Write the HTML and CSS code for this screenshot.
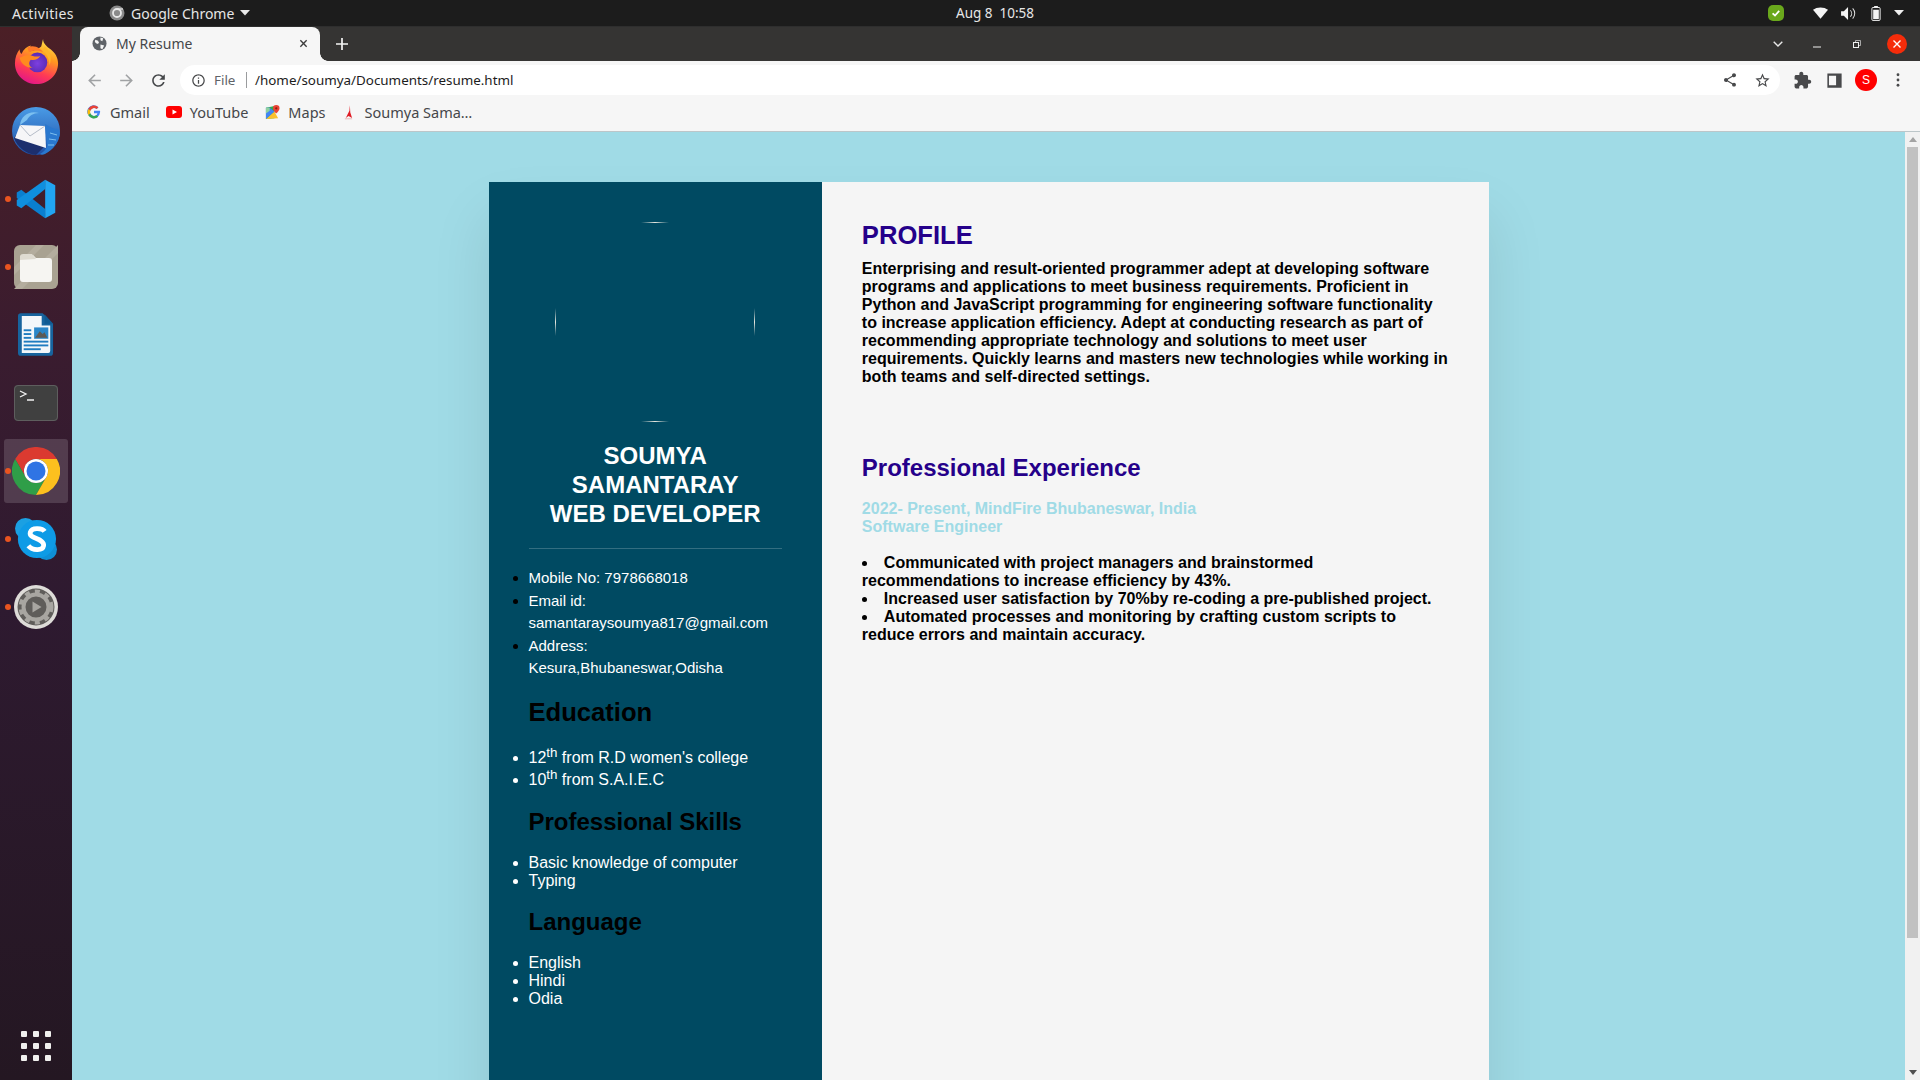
FILE: index.html
```html
<!DOCTYPE html>
<html lang="en">
<head>
<meta charset="utf-8">
<title>My Resume</title>
<link rel="stylesheet" href="styles.css">
</head>
<body>
<div class="desktop">
  <header class="topbar">
    <div class="top-left">
      <span class="activities">Activities</span>
      <svg class="app-ind" viewBox="0 0 16 16"><circle cx="8" cy="8" r="7.500" fill="#8a8a8a"/><circle cx="8" cy="8" r="4" fill="none" stroke="#e8e8e8" stroke-width="1.800"/><path d="M8 4h6" stroke="#e8e8e8" stroke-width="1.200"/></svg>
      <span class="app-name">Google Chrome</span>
      <svg class="caret" viewBox="0 0 10 6"><path d="M0 0h10L5 5.500z" fill="#e8e8e8"/></svg>
    </div>
    <div class="clock">Aug 8&nbsp;&nbsp;10:58</div>
    <div class="tray">
      <svg class="tray-shield" viewBox="0 0 16 16"><rect width="16" height="16" rx="5" fill="#6aa81c"/><path d="M4.600 8.300l2.400 2.200 4.200-4.600" fill="none" stroke="#fff" stroke-width="1.800"/></svg>
      <svg class="tray-wifi" viewBox="0 0 16 12"><path d="M0 2.600C2 .9 5 0 8 0s6 .9 8 2.600L8 12z" fill="#f4f4f4"/></svg>
      <svg class="tray-vol" viewBox="0 0 16 14"><path d="M0 4.500h3L7.500 0v14L3 9.500H0z" fill="#f4f4f4"/><path d="M10 3.500a5 5 0 0 1 0 7M12.500 1.500a8 8 0 0 1 0 11" fill="none" stroke="#dcdcdc" stroke-width="1.100"/></svg>
      <svg class="tray-bat" viewBox="0 0 10 16"><path d="M3 0h4v1.500H3z" fill="#f4f4f4"/><rect x=".6" y="1.600" width="8.800" height="13.800" rx="1.200" fill="none" stroke="#f4f4f4" stroke-width="1"/><rect x="2" y="4" width="6" height="10" fill="#f4f4f4"/></svg>
      <svg class="tray-caret" viewBox="0 0 10 6"><path d="M0 0h10L5 5.500z" fill="#f0f0f0"/></svg>
    </div>
  </header>

  <div class="workspace">
    <nav class="dock">
      <div class="dock-item">
        <svg class="ico-firefox" viewBox="0 0 48 48">
          <defs>
            <linearGradient id="ff1" x1="0.700" y1="0" x2="0.300" y2="1"><stop offset="0" stop-color="#ffe14a"/><stop offset=".35" stop-color="#ff9a1f"/><stop offset=".7" stop-color="#ff3a55"/><stop offset="1" stop-color="#e0148c"/></linearGradient>
            <radialGradient id="ff2" cx=".5" cy=".55" r=".55"><stop offset="0" stop-color="#7d3fe0"/><stop offset="1" stop-color="#5a2ab5"/></radialGradient>
          </defs>
          <path d="M31 0c0 5 4 8 8 11 5 4 8 9 8 15 0 12-10 22-23 22S1 38 1 26c0-6 2-11 5-15 0 3 1 4 2 5 2-5 6-8 10-9-2 3-2 5-1 6 5-1 9-2 12-5 1-3 1-5 2-8z" fill="url(#ff1)"/>
          <circle cx="25" cy="25" r="10.500" fill="url(#ff2)"/>
          <path d="M6 20c5-3 10-4 14-2 3 1 6 1 8 0-2 4-7 5-10 4-3 3-2 7 2 9-7 0-13-5-14-11z" fill="#ff8a1f"/>
          <path d="M33 8c5 5 8 11 5 20-1-8-3-13-8-16z" fill="#ffb52a"/>
          <path d="M14 9c4-2 9-2 13 1 1 1 3 2 4 4-5-2-11-2-15 0z" fill="#ff7a2a"/>
        </svg>
      </div>
      <div class="dock-item">
        <svg class="ico-tb" viewBox="0 0 48 48">
          <defs><linearGradient id="tb1" x1="0.500" y1="0" x2="0.500" y2="1"><stop offset="0" stop-color="#4a9be6"/><stop offset="1" stop-color="#1e4fa6"/></linearGradient></defs>
          <circle cx="24" cy="24" r="24" fill="url(#tb1)"/>
          <path d="M2 31c3 9 12 16 22 17l8-8-28-12z" fill="#1c2f6e"/>
          <path d="M8 18C9 8 18 3 27 6c-6 0-10 3-12 7z" fill="#7cc0f0"/>
          <path d="M8 18l25 1 1 22-31-10z" fill="#f6f6f8"/>
          <path d="M8 18l10 11 15-10" fill="none" stroke="#aeb6c2" stroke-width=".9"/>
          <path d="M33 17c5 3 9 5 13 5l2 4c-1 9-7 17-15 21-2 1-4 1-5 0 4-2 6-5 7-8z" fill="#2a78cf"/>
          <path d="M38 26l7 2M37 32l7 1M36 38l6 0" stroke="#7fc0ee" stroke-width="1"/>
        </svg>
      </div>
      <div class="dock-item">
        <span class="dot"></span>
        <svg class="ico-code" viewBox="0 0 48 48">
          <path d="M3 17l5-3 26 21v10L3 23z" fill="#0a7fd0"/>
          <path d="M34 3v10L8 34l-5-3v-6z" fill="#0f8fdf"/>
          <path d="M34 3l11 6v30l-11 6z" fill="#21a5f2"/>
        </svg>
      </div>
      <div class="dock-item">
        <span class="dot"></span>
        <svg class="ico-files" viewBox="0 0 44 44">
          <rect width="44" height="44" rx="6" fill="#a9a292"/>
          <path d="M30 0L0 30v-8L22 0zM44 8L8 44H0L44 0z" fill="#b4ad9e"/>
          <path d="M6 13a3 3 0 0 1 3-3h10l3 3h13a3 3 0 0 1 3 3v18a3 3 0 0 1-3 3H9a3 3 0 0 1-3-3z" fill="#f6f5f2"/>
          <path d="M6 15v-3a3 3 0 0 1 3-3h9l4 5z" fill="#dfdbd1"/>
        </svg>
      </div>
      <div class="dock-item">
        <svg class="ico-writer" viewBox="0 0 38 46">
          <path d="M3 0h23l11 11v31a3 3 0 0 1-3 3H3a3 3 0 0 1-3-3V3a3 3 0 0 1 3-3z" fill="#17649e"/>
          <path d="M4 3h21v10h9v27a2 2 0 0 1-2 2H4z" fill="#f3f7fa"/>
          <path d="M28 1l9 10h-9z" fill="#0f5a92"/>
          <rect x="6" y="17" width="8" height="2" fill="#1f7cc0"/><rect x="6" y="21" width="8" height="2" fill="#1f7cc0"/><rect x="6" y="25" width="8" height="2" fill="#1f7cc0"/>
          <rect x="6" y="29" width="26" height="2" fill="#1f7cc0"/><rect x="6" y="33" width="26" height="2" fill="#1f7cc0"/><rect x="6" y="37" width="18" height="2" fill="#1f7cc0"/>
          <rect x="17" y="15" width="15" height="12" fill="#2a86c8"/><path d="M18 26l5-7 3 3 2-2 3 6z" fill="#5d5a55"/>
        </svg>
      </div>
      <div class="dock-item">
        <svg class="ico-term" viewBox="0 0 44 36">
          <rect width="44" height="36" rx="4" fill="#404040"/>
          <rect x=".5" y=".5" width="43" height="35" rx="3.500" fill="none" stroke="#5e5e5e"/>
          <path d="M6 6l6 3-6 3" fill="none" stroke="#f2f2f2" stroke-width="1.300"/>
          <path d="M13 15h7" stroke="#f2f2f2" stroke-width="1.500"/>
        </svg>
      </div>
      <div class="dock-item dock-item-active">
        <span class="dot"></span>
        <svg class="ico-chrome" viewBox="0 0 48 48">
          <path d="M3.200 12A24 24 0 0 1 44.800 12H24A12 12 0 0 0 13.600 30z" fill="#db3a30"/>
          <path d="M3.200 12A24 24 0 0 0 24 48L34.400 30A12 12 0 0 1 13.600 30z" fill="#2f9e48"/>
          <path d="M44.800 12A24 24 0 0 1 24 48L34.400 30A12 12 0 0 0 24 12z" fill="#fcc01e"/>
          <circle cx="24" cy="24" r="12" fill="#fff"/><circle cx="24" cy="24" r="9.500" fill="#2f74e4"/>
        </svg>
      </div>
      <div class="dock-item">
        <span class="dot"></span>
        <svg class="ico-skype" viewBox="0 0 44 44">
          <circle cx="11" cy="11" r="11" fill="#1ba0e2"/><circle cx="33" cy="33" r="11" fill="#0f8fd6"/>
          <circle cx="23" cy="22" r="20" fill="#0e9be6"/>
          <path d="M31 14c-2-3-13-5-15 1-2 7 15 6 14 14-1 6-12 5-16 0" fill="none" stroke="#fff" stroke-width="5"/>
        </svg>
      </div>
      <div class="dock-item">
        <span class="dot"></span>
        <svg class="ico-settings" viewBox="0 0 44 44">
          <circle cx="22" cy="22" r="22" fill="#dedcd8"/>
          <circle cx="22" cy="22" r="18.500" fill="#5f5d5a"/>
          <circle cx="22" cy="22" r="12.500" fill="none" stroke="#a8a6a1" stroke-width="4"/>
          <circle cx="22" cy="22" r="15.500" fill="none" stroke="#a8a6a1" stroke-width="4" stroke-dasharray="5 5.200"/>
          <path d="M18.500 16.500l9 5.500-9 5.500z" fill="#a8a6a1"/>
        </svg>
      </div>
      <div class="apps-grid">
        <i></i><i></i><i></i><i></i><i></i><i></i><i></i><i></i><i></i>
      </div>
    </nav>

    <div class="browser">
      <div class="tabstrip">
        <div class="tab">
          <svg class="tab-globe" viewBox="0 0 16 16"><circle cx="8" cy="8" r="7.500" fill="#5f6368"/><path d="M3.500 4l3 1 1 2.500-2 1-2.500-2zM9 1.500l3 1-1 3-2-1zM9 9l4 1-2 4-2-1z" fill="#f6f6f6"/></svg>
          <span class="tab-title">My Resume</span>
          <svg class="tab-close" viewBox="0 0 10 10"><path d="M1.500 1.500l7 7M8.500 1.500l-7 7" stroke="#3c3c3c" stroke-width="1.500"/></svg>
        </div>
        <svg class="newtab" viewBox="0 0 12 12"><path d="M6 0v12M0 6h12" stroke="#f4f4f4" stroke-width="1.700"/></svg>
        <div class="win-controls">
          <svg class="win-chev" viewBox="0 0 10 6"><path d="M.7.700L5 5l4.300-4.300" fill="none" stroke="#e8e8e8" stroke-width="1.400"/></svg>
          <svg class="win-min" viewBox="0 0 8 2"><path d="M0 1h8" stroke="#f0f0f0" stroke-width="1"/></svg>
          <svg class="win-max" viewBox="0 0 8 8"><rect x=".5" y="2.500" width="5" height="5" fill="none" stroke="#f0f0f0"/><path d="M2.500 2V.5h5v5H6" fill="none" stroke="#c8c8c8" stroke-width=".8"/></svg>
          <div class="win-close"><svg viewBox="0 0 8 8"><path d="M.5.500l7 7M7.500.500l-7 7" stroke="#fff" stroke-width="1.400"/></svg></div>
        </div>
      </div>

      <div class="toolbar">
        <span class="tb-btn"><svg viewBox="0 0 24 24"><path class="ic-muted" d="M20 11H7.830l5.590-5.590L12 4l-8 8 8 8 1.410-1.410L7.830 13H20v-2z"/></svg></span>
        <span class="tb-btn"><svg viewBox="0 0 24 24"><path class="ic-muted" d="M4 11h12.170l-5.590-5.590L12 4l8 8-8 8-1.410-1.410L16.170 13H4v-2z"/></svg></span>
        <span class="tb-btn"><svg viewBox="0 0 24 24"><path class="ic-dark" d="M17.650 6.350C16.200 4.900 14.210 4 12 4c-4.420 0-7.990 3.580-7.990 8s3.570 8 7.990 8c3.730 0 6.840-2.550 7.730-6h-2.080c-.82 2.330-3.040 4-5.650 4-3.310 0-6-2.690-6-6s2.690-6 6-6c1.660 0 3.140.690 4.220 1.780L13 11h7V4l-2.350 2.350z"/></svg></span>
        <div class="omnibox">
          <svg class="omni-info" viewBox="0 0 24 24"><path class="ic-mid" d="M11 7h2v2h-2zm0 4h2v6h-2zm1-9C6.480 2 2 6.480 2 12s4.480 10 10 10 10-4.480 10-10S17.520 2 12 2zm0 18c-4.410 0-8-3.590-8-8s3.590-8 8-8 8 3.590 8 8-3.590 8-8 8z"/></svg>
          <span class="omni-file">File</span>
          <span class="omni-sep"></span>
          <span class="omni-url">/home/soumya/Documents/resume.html</span>
          <svg class="omni-share" viewBox="0 0 24 24"><path class="ic-mid" d="M18 16.080c-.76 0-1.440.3-1.960.77L8.910 12.700c.05-.23.090-.46.090-.7s-.04-.47-.09-.7l7.050-4.110c.54.500 1.250.81 2.040.81 1.660 0 3-1.340 3-3s-1.340-3-3-3-3 1.340-3 3c0 .24.040.47.090.7L8.040 9.810C7.500 9.310 6.790 9 6 9c-1.660 0-3 1.340-3 3s1.340 3 3 3c.79 0 1.500-.31 2.040-.81l7.120 4.160c-.05.21-.08.43-.08.65 0 1.610 1.310 2.920 2.920 2.920s2.920-1.310 2.920-2.920-1.310-2.920-2.920-2.920z"/></svg>
          <svg class="omni-star" viewBox="0 0 24 24"><path class="ic-mid" d="M22 9.240l-7.190-.62L12 2 9.190 8.630 2 9.240l5.460 4.730L5.820 21 12 17.270 18.180 21l-1.630-7.030L22 9.240zM12 15.400l-3.760 2.270 1-4.280-3.320-2.880 4.380-.38L12 6.100l1.710 4.040 4.380.38-3.320 2.880 1 4.280L12 15.400z"/></svg>
        </div>
        <span class="tb-btn tb-first"><svg viewBox="0 0 24 24"><path class="ic-mid" d="M20.500 11H19V7c0-1.100-.9-2-2-2h-4V3.500C13 2.120 11.880 1 10.500 1S8 2.120 8 3.500V5H4c-1.100 0-1.990.9-1.990 2v3.800H3.500c1.490 0 2.700 1.210 2.700 2.700s-1.210 2.700-2.700 2.700H2V20c0 1.100.9 2 2 2h3.800v-1.500c0-1.490 1.210-2.700 2.700-2.700 1.490 0 2.700 1.210 2.700 2.700V22H17c1.100 0 2-.9 2-2v-4h1.500c1.380 0 2.500-1.120 2.500-2.500S21.880 11 20.500 11z"/></svg></span>
        <span class="tb-btn"><svg viewBox="0 0 24 24"><path class="ic-mid" fill-rule="evenodd" d="M3 3h18v18H3zM5 6v12h9V6z"/></svg></span>
        <span class="tb-btn"><span class="avatar">S</span></span>
        <span class="tb-btn"><svg class="ic-menu" viewBox="0 0 4 16"><circle cx="2" cy="2" r="1.600" class="ic-mid"/><circle cx="2" cy="8" r="1.600" class="ic-mid"/><circle cx="2" cy="14" r="1.600" class="ic-mid"/></svg></span>
      </div>

      <div class="bookmarks">
        <div class="bm bm-gmail">
          <svg viewBox="0 0 16 16"><path d="M14.700 6.700H8v2.800h3.900c-.4 2-2 3.100-3.900 3.100A4.600 4.600 0 1 1 11 4.500l2-2A7.400 7.400 0 1 0 15 8c0-.5 0-.9-.3-1.300z" fill="#4285f4"/><path d="M1.400 4.700L3.900 6.500A4.600 4.600 0 0 1 11 4.500l2-2A7.400 7.400 0 0 0 1.400 4.700z" fill="#ea4335"/><path d="M1.400 11.300A7.400 7.400 0 0 0 13 13.500l-2.300-1.800a4.600 4.600 0 0 1-6.900-2.300z" fill="#34a853"/><path d="M1.400 4.700a7.400 7.400 0 0 0 0 6.600L3.800 9.400a4.600 4.600 0 0 1 .1-2.900z" fill="#fbbc05"/></svg>
          <span>Gmail</span>
        </div>
        <div class="bm bm-yt">
          <svg viewBox="0 0 16 12"><rect width="16" height="12" rx="3" fill="#f00"/><path d="M6.500 3.500L11 6l-4.500 2.500z" fill="#fff"/></svg>
          <span>YouTube</span>
        </div>
        <div class="bm bm-maps">
          <svg viewBox="0 0 16 16"><path d="M1 3l9-2v13l-9 1z" fill="#35a853"/><path d="M1 15L10 7l4 7z" fill="#fbc02d"/><path d="M1 3h4l5 4-9 8z" fill="#4285f4"/><path d="M1 3l4 0 0 3-4 3z" fill="#8fd19e"/><path d="M12 0a3.500 3.500 0 0 1 3.500 3.500C15.500 6 12 9 12 9S8.500 6 8.500 3.500A3.500 3.500 0 0 1 12 0z" fill="#ea4335"/><circle cx="12" cy="3.500" r="1.200" fill="#8c1c13"/></svg>
          <span>Maps</span>
        </div>
        <div class="bm bm-site">
          <svg viewBox="0 0 10 16"><path d="M6.500 0L6 6 2 14l3-2 4 2-2-6z" fill="#e01b24"/><path d="M1 15h8" stroke="#e9b0b0" stroke-width="1"/></svg>
          <span>Soumya Sama…</span>
        </div>
      </div>

      <div class="page-area">
        <div class="viewport">
          <main class="resume">
            <aside class="side">
              <svg class="photo" viewBox="0 0 200 200">
                <defs>
                  <linearGradient id="hz"><stop offset="0" stop-color="#d8d8d0" stop-opacity="0"/><stop offset=".5" stop-color="#e8e8e0"/><stop offset="1" stop-color="#d8d8d0" stop-opacity="0"/></linearGradient>
                  <linearGradient id="vt" x2="0" y2="1"><stop offset="0" stop-color="#d8d8d0" stop-opacity="0"/><stop offset=".5" stop-color="#e8e8e0"/><stop offset="1" stop-color="#d8d8d0" stop-opacity="0"/></linearGradient>
                </defs>
                <rect x="86" y="0" width="28" height="1" fill="url(#hz)"/>
                <rect x="86" y="199" width="28" height="1" fill="url(#hz)"/>
                <rect x="0" y="86" width="1" height="28" fill="url(#vt)"/>
                <rect x="199" y="86" width="1" height="28" fill="url(#vt)"/>
              </svg>
              <h1 class="name">SOUMYA SAMANTARAY<br>WEB DEVELOPER</h1>
              <hr class="rule">
              <ul class="contact">
                <li>Mobile No: 7978668018</li>
                <li>Email id: samantaraysoumya817@gmail.com</li>
                <li>Address: Kesura,Bhubaneswar,Odisha</li>
              </ul>
              <h2 class="side-title side-title-lg">Education</h2>
              <ul class="plain-list">
                <li>12<sup>th</sup> from R.D women's college</li>
                <li>10<sup>th</sup> from S.A.I.E.C</li>
              </ul>
              <h2 class="side-title">Professional Skills</h2>
              <ul class="plain-list">
                <li>Basic knowledge of computer</li>
                <li>Typing</li>
              </ul>
              <h2 class="side-title">Language</h2>
              <ul class="plain-list">
                <li>English</li>
                <li>Hindi</li>
                <li>Odia</li>
              </ul>
            </aside>
            <section class="content">
              <h2 class="main-title main-title-lg">PROFILE</h2>
              <p class="summary">Enterprising and result-oriented programmer adept at developing software programs and applications to meet business requirements. Proficient in Python and JavaScript programming for engineering software functionality to increase application efficiency. Adept at conducting research as part of recommending appropriate technology and solutions to meet user requirements. Quickly learns and masters new technologies while working in both teams and self-directed settings.</p>
              <h2 class="main-title exp-title">Professional Experience</h2>
              <p class="job">2022- Present, MindFire Bhubaneswar, India<br>Software Engineer</p>
              <ul class="duties">
                <li>Communicated with project managers and brainstormed recommendations to increase efficiency by 43%.</li>
                <li>Increased user satisfaction by 70%by re-coding a pre-published project.</li>
                <li>Automated processes and monitoring by crafting custom scripts to reduce errors and maintain accuracy.</li>
              </ul>
            </section>
          </main>
        </div>
        <div class="scrollbar">
          <svg class="sb-up" viewBox="0 0 8 5"><path d="M4 0l4 5H0z" fill="#a3a3a3"/></svg>
          <div class="sb-thumb"></div>
          <svg class="sb-down" viewBox="0 0 8 5"><path d="M4 5L0 0h8z" fill="#505050"/></svg>
        </div>
      </div>
    </div>
  </div>
</div>
</body>
</html>
```

FILE: styles.css
```css
* { box-sizing: border-box; }
html, body { margin: 0; height: 100%; overflow: hidden; }
body { font-family: "Liberation Sans", Arial, sans-serif; }
svg { display: block; flex: none; }

.desktop { width: 1920px; height: 1080px; display: flex; flex-direction: column; overflow: hidden; }

/* top bar */
.topbar { height: 27px; flex: none; background: #1c1c1c; color: #e6e6e6; display: flex; align-items: center; font: 14px "Noto Sans", sans-serif; border-bottom: 1px solid #2e2e2e; }
.top-left { width: 956px; display: flex; align-items: center; padding-left: 12px; }
.activities { width: 97px; letter-spacing: .35px; }
.app-ind { width: 16px; height: 16px; margin-right: 6px; }
.app-name { width: 104px; white-space: nowrap; }
.caret { width: 10px; height: 6px; margin-left: 5px; }
.clock { width: 80px; font-size: 13.500px; white-space: nowrap; }
.tray { flex: 1; display: flex; align-items: center; }
.tray-shield { width: 16px; height: 16px; margin-left: 732px; }
.tray-wifi { width: 15px; height: 12px; margin-left: 29px; }
.tray-vol { width: 15px; height: 13px; margin-left: 13px; }
.tray-bat { width: 10px; height: 15px; margin-left: 15px; }
.tray-caret { width: 10px; height: 6px; margin-left: 13px; }

.workspace { flex: 1; display: flex; min-height: 0; }

/* dock */
.dock { width: 72px; flex: none; display: flex; flex-direction: column; padding-top: 2px; background: linear-gradient(180deg, #4b1f26 0%, #3a1c2f 30%, #2e1a30 55%, #241722 100%); }
.dock-item { height: 68px; flex: none; display: flex; align-items: center; justify-content: center; position: relative; }
.dock-item-active::before { content: ""; position: absolute; left: 4px; right: 4px; top: 2px; bottom: 2px; background: rgba(255,255,255,.15); border-radius: 3px; }
.dock-item svg { position: relative; }
.dot { position: absolute; left: 5px; top: 31px; width: 6px; height: 6px; border-radius: 50%; background: #e95420; z-index: 1; }
.ico-firefox { width: 45px; height: 47px; margin-top: -3px; }
.ico-tb { width: 48px; height: 48px; }
.ico-code { width: 44px; height: 44px; }
.ico-files { width: 44px; height: 44px; }
.ico-writer { width: 36px; height: 44px; }
.ico-term { width: 44px; height: 36px; }
.ico-chrome { width: 48px; height: 48px; }
.ico-skype { width: 42px; height: 42px; }
.ico-settings { width: 44px; height: 44px; }
.apps-grid { margin: auto 0 19px 21px; width: 30px; display: grid; grid-template-columns: repeat(3, 6px); gap: 6px; }
.apps-grid i { height: 6px; background: #f0f0ee; border-radius: 1px; }

/* browser chrome */
.browser { flex: 1; min-width: 0; display: flex; flex-direction: column; }
.tabstrip { height: 34px; flex: none; background: #353433; display: flex; align-items: center; padding-left: 8px; }
.tab { width: 240px; height: 34px; align-self: flex-end; background: #f6f6f6; border-radius: 8px 8px 0 0; display: flex; align-items: center; padding: 0 12px 1px; position: relative; color: #45474a; font: 14px "Noto Sans", sans-serif; }
.tab::before, .tab::after { content: ""; position: absolute; bottom: 0; width: 8px; height: 8px; }
.tab::before { left: -8px; background: radial-gradient(circle at 0 0, transparent 7.500px, #f6f6f6 8px); }
.tab::after { right: -8px; background: radial-gradient(circle at 100% 0, transparent 7.500px, #f6f6f6 8px); }
.tab-globe { width: 15px; height: 15px; }
.tab-title { flex: 1; margin-left: 9px; }
.tab-close { width: 9px; height: 9px; }
.newtab { width: 12px; height: 12px; margin-left: 16px; }
.win-controls { margin-left: auto; display: flex; align-items: center; height: 100%; }
.win-chev { width: 10px; height: 6px; margin-right: 30px; }
.win-min { width: 8px; height: 2px; margin-right: 32px; margin-top: 5px; }
.win-max { width: 8px; height: 8px; margin-right: 26px; }
.win-close { width: 20px; height: 20px; margin-right: 13px; border-radius: 50%; background: #f52c0a; display: flex; align-items: center; justify-content: center; }
.win-close svg { width: 8px; height: 8px; }

.toolbar { height: 36px; flex: none; background: #f6f6f6; display: flex; align-items: center; padding: 2px 6px 0; }
.tb-btn { width: 32px; height: 32px; flex: none; display: flex; align-items: center; justify-content: center; }
.tb-btn svg { width: 19px; height: 19px; }
.tb-btn .ic-menu { width: 4px; height: 14px; }
.tb-first { margin-left: 6px; }
.ic-muted { fill: #a0a2a4; }
.ic-dark { fill: #45474a; }
.ic-mid { fill: #48494b; }
.omnibox { flex: 1; height: 30px; margin-left: 6px; background: #fff; border-radius: 15px; display: flex; align-items: center; padding-left: 11px; font: 13.400px "Noto Sans", sans-serif; }
.omni-info { width: 15px; height: 15px; }
.omni-file { margin-left: 8px; color: #5f6368; width: 24px; }
.omni-sep { width: 1px; height: 16px; background: #9a9c9e; margin-left: 8px; }
.omni-url { margin-left: 8px; color: #1c1c1c; flex: 1; white-space: nowrap; }
.omni-share { width: 16px; height: 16px; margin-right: 16px; }
.omni-star { width: 17px; height: 17px; margin-right: 9px; }
.avatar { width: 22px; height: 22px; border-radius: 50%; background: #f00; color: #fff; font: 12px "Liberation Sans", sans-serif; display: flex; align-items: center; justify-content: center; }

.bookmarks { height: 35px; flex: none; background: #f6f6f6; border-bottom: 1px solid #bcc6c9; display: flex; align-items: center; padding-bottom: 4px; color: #45474a; font: 14.500px "Noto Sans", sans-serif; }
.bm { display: flex; align-items: center; white-space: nowrap; }
.bm-gmail svg { width: 14px; height: 14px; margin-left: 15px; margin-right: 9px; }
.bm-yt svg { width: 16px; height: 12px; margin-left: 16px; margin-right: 8px; }
.bm-maps svg { width: 15px; height: 15px; margin-left: 17px; margin-right: 8px; }
.bm-site svg { width: 9px; height: 15px; margin-left: 18px; margin-right: 12px; }

/* page */
.page-area { flex: 1; min-height: 0; display: flex; }
.viewport { flex: 1; min-width: 0; background: #a0dbe6; overflow: hidden; padding-top: 50px; }
.scrollbar { width: 15px; flex: none; background: #f1f1f1; display: flex; flex-direction: column; align-items: center; padding-top: 5px; }
.sb-up { width: 8px; height: 5px; margin-bottom: 5px; }
.sb-thumb { width: 11px; height: 791px; background: #c1c1c1; }
.sb-down { width: 8px; height: 5px; margin-top: auto; margin-bottom: 5px; }

.resume { width: 1000px; min-height: 1000px; margin: 0 auto; background: #f5f5f5; display: grid; grid-template-columns: 1fr 2fr; box-shadow: 0 35px 55px rgba(0,0,0,.1); }
.side { background: #004a62; padding: 40px; }
.photo { width: 200px; height: 200px; margin: 0 auto; }
.name { margin: 19px 0 0; color: #fff; font-size: 24px; line-height: 29px; text-align: center; font-weight: 700; }
.rule { border: 0; height: 1px; background: rgba(255,255,255,.2); margin: 20px 0 0; }
.contact { margin: 18px 0; padding: 0; color: #fff; font-size: 15px; line-height: 22.500px; }
.contact li::marker { color: #000; }
.side-title { color: #000; font-size: 24px; margin: 18.600px 0 18px; }
.side-title-lg { font-size: 25.600px; margin-top: 18px; }
.plain-list { margin: 18px 0; padding: 0; color: #fff; font-size: 16px; }

.content { padding: 39px 40px 40px; color: #000; }
.main-title { color: #25008a; font-size: 24px; margin: 0; }
.main-title-lg { font-size: 25.600px; }
.summary { margin: 10px 0 0; font-weight: 700; font-size: 16px; }
.exp-title { margin-top: 68px; }
.job { margin: 18px 0 0; color: #a0dbe6; font-weight: 700; font-size: 16px; }
.duties { margin: 18px 0 0; padding: 0; list-style-position: inside; font-weight: 700; font-size: 16px; }
```
